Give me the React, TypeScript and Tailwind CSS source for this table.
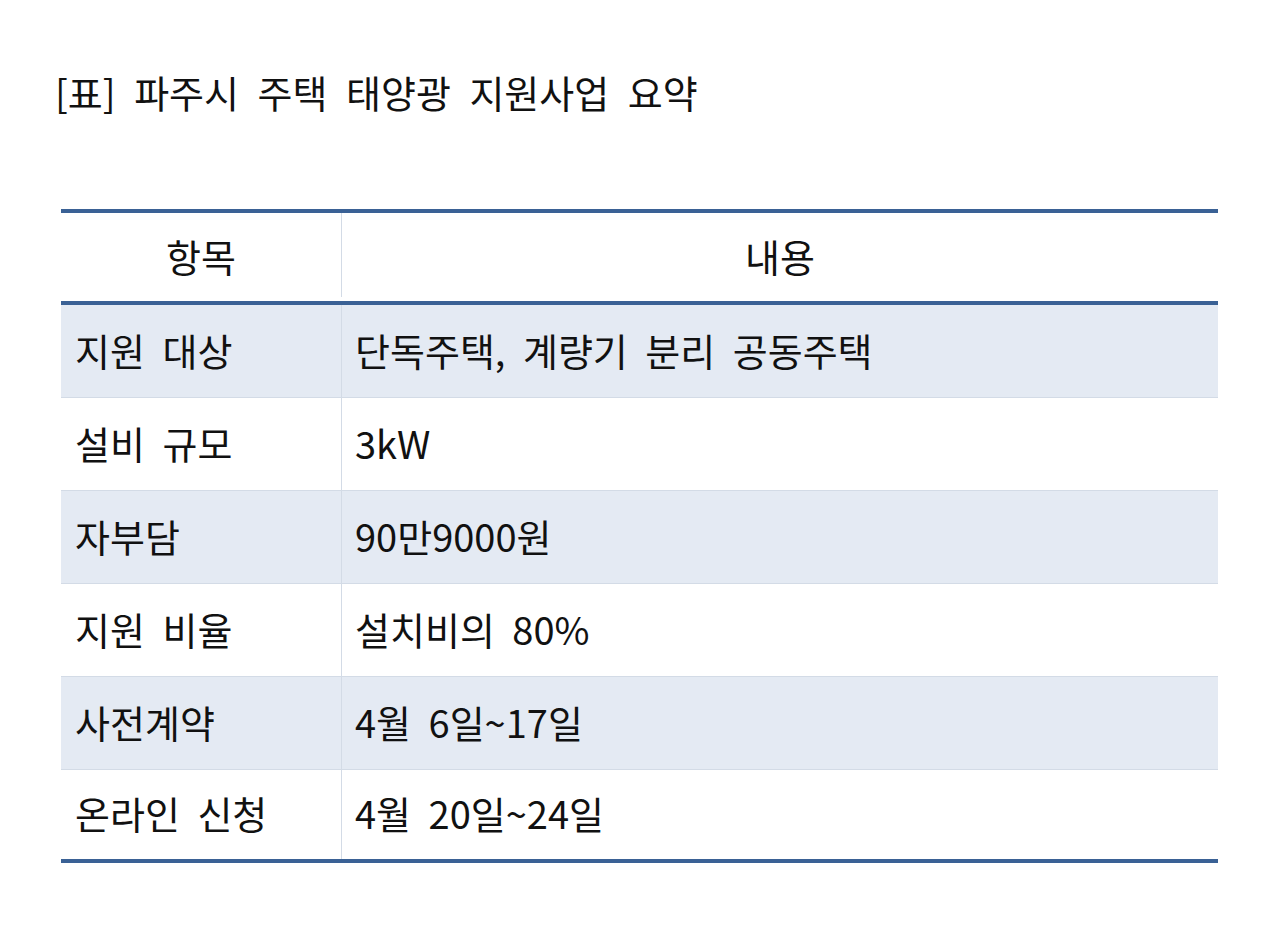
import * as React from "react";

const ROWS: { label: string; value: string }[] = [
  { label: "지원 대상", value: "단독주택, 계량기 분리 공동주택" },
  { label: "설비 규모", value: "3kW" },
  { label: "자부담", value: "90만9000원" },
  { label: "지원 비율", value: "설치비의 80%" },
  { label: "사전계약", value: "4월 6일~17일" },
  { label: "온라인 신청", value: "4월 20일~24일" },
];

const FONT = "font-['Noto_Sans_CJK_KR','Noto_Sans',sans-serif]";

export default function App() {
  return (
    <div className={`min-h-[934px] w-[1280px] bg-white text-[#111] ${FONT}`}>
      <div className="pl-[55px] pt-[67px]">
        <h1 className="text-[38px] leading-[50px] font-normal [word-spacing:10px]">
          [표] 파주시 주택 태양광 지원사업 요약
        </h1>
      </div>

      <div className="ml-[61px] mt-[92px] w-[1157px] border-y-4 border-[#3a6195]">
        {/* header */}
        <div className="flex h-[92px] border-b-4 border-[#3a6195] pb-[4px] text-[38px]">
          <div className="flex w-[281px] items-center justify-center border-r border-[#d3dbe6]">
            항목
          </div>
          <div className="flex flex-1 items-center justify-center">내용</div>
        </div>

        {ROWS.map((row, i) => {
          const last = i === ROWS.length - 1;
          return (
            <div
              key={row.label}
              className={
                "flex text-[38px] [word-spacing:9px] " +
                (i % 2 === 0 ? "bg-[#e4eaf3] " : "bg-white ") +
                (last ? "h-[89px]" : "h-[93px] border-b border-[#d3dbe6]")
              }
            >
              <div className="flex w-[281px] items-center border-r border-[#d3dbe6] pb-[4px] pl-[14px]">
                {row.label}
              </div>
              <div className="flex flex-1 items-center pb-[4px] pl-[13px]">{row.value}</div>
            </div>
          );
        })}
      </div>
    </div>
  );
}
